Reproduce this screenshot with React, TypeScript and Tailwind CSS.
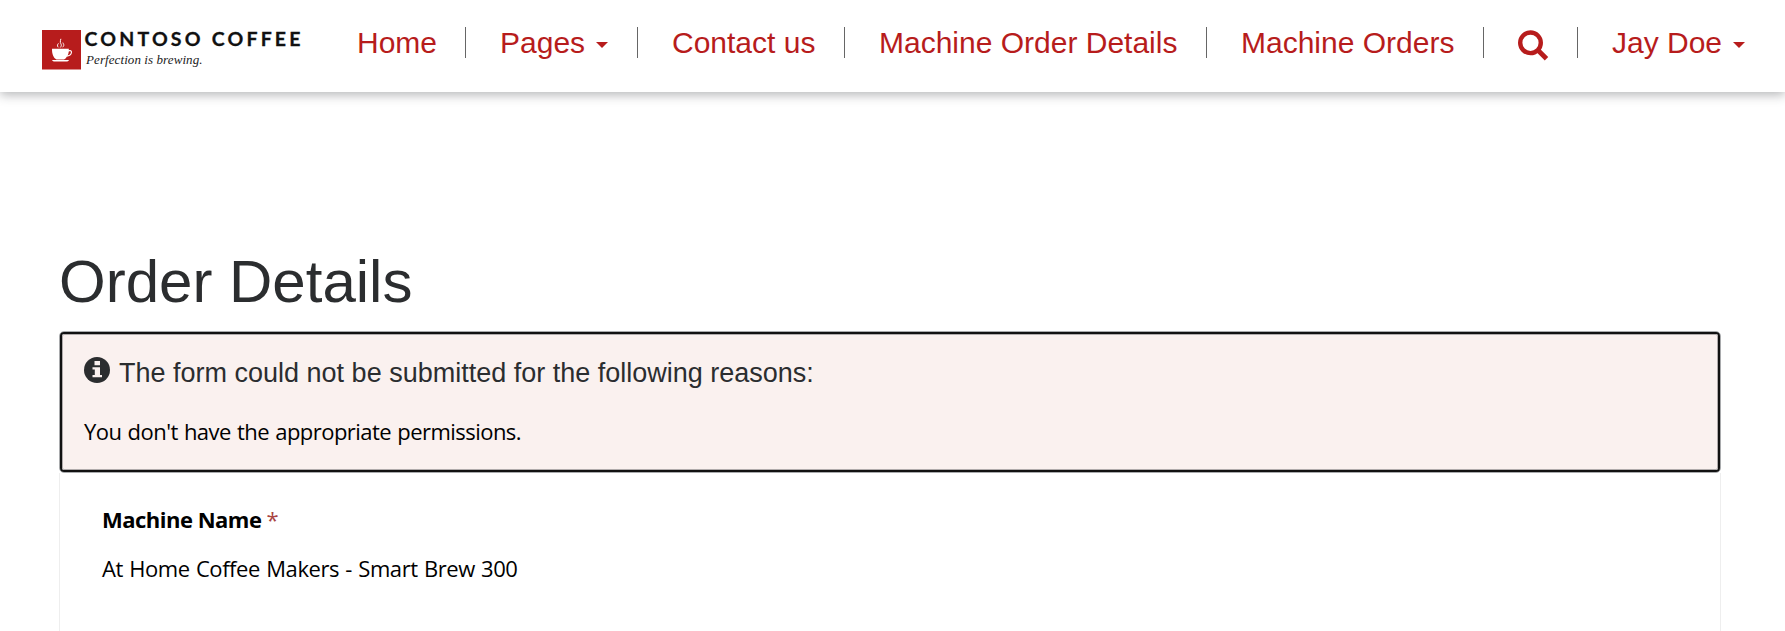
import React from 'react';

function Logo() {
  return (
    <svg width="264" height="44" viewBox="0 0 264 44" role="img" aria-label="Contoso Coffee">
      <rect x="0" y="3" width="39" height="39.5" fill="#b71c1c" />
      <g fill="#fff">
        <path fillRule="evenodd" d="M10 21.800h16.800v1.400c2-.8 3.400.2 3.200 2.200-.3 2.600-2.500 4-5.300 4.300-.7 1.300-1.500 2.200-2.700 2.900h-7.500c-3-1.700-4.600-5.600-4.500-10.800zm16.800 2.600c-.2 1.500-.6 2.800-1.200 4.100 1.800-.3 3.100-1.300 3.300-2.900.1-1.200-.8-1.700-2.100-1.200z" />
        <path d="M10 33h17c-.5 1.100-1.500 1.600-3 1.600H13c-1.500 0-2.500-.5-3-1.600z" />
      </g>
      <g fill="none" stroke="#fff" strokeWidth="1" strokeLinecap="round">
        <path d="M16 20c-1-1.500-.5-2.400.2-3.300" />
        <path d="M18.500 20.200c2-2.200 0-3.400-.2-5-.1-1.200.3-2 .5-3" />
        <path d="M20.800 20c2-1.800.7-2.700.2-4" />
      </g>
      <text x="42.500" y="19" textLength="216" fill="#111" stroke="#111" strokeWidth="0.3" fontFamily="Lato, sans-serif" fontWeight="700" fontSize="19.500">CONTOSO COFFEE</text>
      <text x="44" y="37" textLength="116.500" fill="#222" fontFamily="Liberation Serif, serif" fontStyle="italic" fontSize="13">Perfection is brewing.</text>
    </svg>
  );
}

function Caret() {
  return (
    <svg className="ml-[11px] mt-1" width="12" height="6" viewBox="0 0 12 6">
      <path d="M0 0h12L6 6z" fill="#b71c1c" />
    </svg>
  );
}

function SearchIcon() {
  return (
    <svg className="mt-[5px]" width="31" height="31" viewBox="0 0 31 31" fill="none" stroke="#b71c1c">
      <circle cx="12.500" cy="12.800" r="10.300" strokeWidth="4.400" />
      <path d="M19.500 19.800l9 9" strokeWidth="4.800" />
    </svg>
  );
}

function NavItem({ className, children }: { className: string; children: React.ReactNode }) {
  return <li className={`flex h-[31px] items-center border-l border-[#666] pl-[34px] ${className}`}>{children}</li>;
}

export default function App() {
  return (
    <div className="flex h-[631px] flex-col overflow-hidden bg-white font-['Liberation_Sans',Arial,sans-serif]">
      <header className="flex h-[92px] shrink-0 bg-white pl-[42px] shadow-[0_3px_10px_0_rgba(40,44,50,0.34)]">
        <div className="w-[315px] pt-[27px]">
          <Logo />
        </div>
        <ul className="flex pt-[27px] text-[30px] leading-[31px] whitespace-nowrap text-[#b71c1c]">
          <li className="flex h-[31px] w-[108px] items-center">Home</li>
          <NavItem className="w-[172px]">Pages<Caret /></NavItem>
          <NavItem className="w-[207px]">Contact us</NavItem>
          <NavItem className="w-[362px]">Machine Order Details</NavItem>
          <NavItem className="w-[277px]">Machine Orders</NavItem>
          <NavItem className="w-[94px]"><SearchIcon /></NavItem>
          <NavItem className="w-[180px]">Jay Doe<Caret /></NavItem>
        </ul>
      </header>
      <main className="flex grow flex-col pl-[59px] pt-[156px]">
        <h1 className="h-[83px] text-[60px] leading-[68px] text-[#2b2d2f]">Order Details</h1>
        <section className="w-[1662px] rounded-[5px] border border-[#a9abad]">
          <div className="rounded-[4px] border-2 border-[#111]">
            <div className="h-[136px] rounded-[2px] border border-[#b0abab] bg-[#faf1ef] pl-[21px]">
              <h2 className="flex pt-[22px] text-[27px] leading-[32px] whitespace-nowrap text-[#2b2d2f]">
                <svg className="mr-[9px]" width="26" height="27" viewBox="0 0 26 27">
                  <circle cx="13" cy="13" r="13" fill="#2b2d2f" />
                  <path d="M10.500 4h5.500v4.300h-5.500zM8.500 10.300H16v7.700h2v2.300H8.500V18h2.300v-5.400H8.500z" fill="#faf1ef" />
                </svg>
                The form could not be submitted for the following reasons:
              </h2>
              <p className="mt-[27px] text-[22px] leading-[30px] text-black font-['Open_Sans',sans-serif]">
                <span className="tracking-[-0.54px] [word-spacing:1px]">You don't have the appropriate permissions.</span>
              </p>
            </div>
          </div>
        </section>
        <section className="w-[1662px] grow border-x border-[#eee] pl-[42px] pt-[31px] text-[22px] leading-[30px] text-black font-['Open_Sans',sans-serif]">
          <div className="flex gap-[5px]">
            <label className="font-bold tracking-[-0.5px]">Machine Name</label>
            <span className="text-[#a94442]">*</span>
          </div>
          <p className="mt-[19px] tracking-[-0.43px] [word-spacing:1px]">At Home Coffee Makers - Smart Brew 300</p>
        </section>
      </main>
    </div>
  );
}
